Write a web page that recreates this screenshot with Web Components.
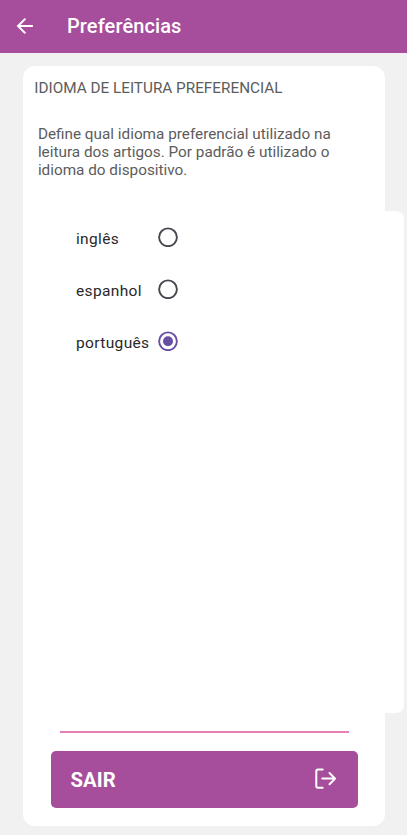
<!DOCTYPE html>
<html lang="pt">
<head>
<meta charset="utf-8">
<title>Preferências</title>
<style>
html,body{margin:0;height:100%}
body{background:#f1f1f1;font-family:Roboto,"Noto Sans",sans-serif;overflow:hidden}
</style>
</head>
<body>
<preferences-screen></preferences-screen>
<script>
const define = (name, html) => customElements.define(name, class extends HTMLElement {
  constructor() {
    super();
    this.attachShadow({mode: "open"}).innerHTML = html;
  }
});

define("app-bar", `<style>
:host{display:flex;align-items:center;height:53.3px;box-sizing:border-box;background:#a64e9c;color:#fff;padding:0 0 1px 15px;gap:32px}
svg{display:block;width:20px;height:20px;margin-top:-1px}
h1{margin:0;font-size:20px;line-height:24px;font-weight:500;letter-spacing:.1px}
</style>
<svg viewBox="0 0 20 20" fill="none" stroke="#fff" stroke-width="2"><path d="M17.9 10H3.2M10.4 2.6L3 10l7.4 7.4"/></svg>
<h1><slot></slot></h1>`);

define("radio-mark", `<style>
:host{display:block;width:20px;height:20px;color:#49454f}
:host([checked]){color:#6750a4}
svg{display:block}
.dot{display:none}
:host([checked]) .dot{display:block}
</style>
<svg width="20" height="20" viewBox="0 0 20 20"><circle cx="10" cy="10.3" r="8.9" fill="none" stroke="currentColor" stroke-width="1.9"/><circle class="dot" cx="10" cy="10.3" r="5" fill="currentColor"/></svg>`);

customElements.define("language-option", class extends HTMLElement {
  constructor() {
    super();
    this.attachShadow({mode: "open"}).innerHTML = `<style>
:host{display:grid;grid-template-columns:82px 20px;align-items:center;height:52px;color:#29282b;font-size:15.5px;line-height:20px;letter-spacing:.36px}
span{padding-top:4px;white-space:nowrap}
</style><span><slot></slot></span><radio-mark></radio-mark>`;
    this.shadowRoot.querySelector("radio-mark").toggleAttribute("checked", this.hasAttribute("checked"));
  }
});

define("option-panel", `<style>
:host{display:block;box-sizing:border-box;width:361px;height:502px;margin-left:20px;padding:0 0 0 32.7px;background:#fff;border-radius:8px}
</style><slot></slot>`);

define("exit-button", `<style>
:host{display:flex;align-items:center;justify-content:space-between;box-sizing:border-box;height:57px;margin:18px 27.3px 0 27.3px;padding:0 20px;background:#a64e9c;border-radius:5px;color:#fff;font-size:20.3px;line-height:24px;font-weight:700}
span{padding-top:1px}
svg{display:block;margin-top:-2px}
</style><span><slot></slot></span>
<svg width="23" height="22" viewBox="0 0 23 22" fill="none" stroke="#fff" stroke-width="2" stroke-linecap="round" stroke-linejoin="round"><path d="M7.7 1.5H3Q1.3 1.5 1.3 3.2V18Q1.3 19.7 3 19.7H7.7M7.3 10.6H20M14.5 5l5.6 5.6L14.5 16.2"/></svg>`);

define("settings-card", `<style>
:host{display:block;box-sizing:border-box;width:361.8px;height:760.5px;margin:12.7px 0 0 23.3px;background:#fff;border-radius:12px}
h2{margin:0;padding:13px 0 0 11px;height:45px;box-sizing:border-box;font-size:15.3px;line-height:18px;font-weight:400;color:#5c5c5c;white-space:nowrap}
p{margin:0;padding:14px 0 0 14.6px;height:100px;box-sizing:border-box;font-size:15.3px;line-height:18px;color:#5c5c5c;white-space:nowrap}
hr{border:0;height:2px;margin:18.1px 36.3px 0 36.3px;background:#e280b5}
</style><h2><slot name="title"></slot></h2><p><slot name="description"></slot></p><slot></slot><hr><slot name="action"></slot>`);

define("preferences-screen", `<style>
:host{display:block;height:835px;overflow:hidden;background:#f1f1f1}
</style>
<app-bar>Preferências</app-bar>
<settings-card>
<span slot="title">IDIOMA DE LEITURA PREFERENCIAL</span>
<span slot="description">Define qual idioma preferencial utilizado na<br>leitura dos artigos. Por padrão é utilizado o<br>idioma do dispositivo.</span>
<option-panel><language-option>inglês</language-option><language-option>espanhol</language-option><language-option checked>português</language-option></option-panel>
<exit-button slot="action">SAIR</exit-button>
</settings-card>`);
</script>
</body>
</html>
